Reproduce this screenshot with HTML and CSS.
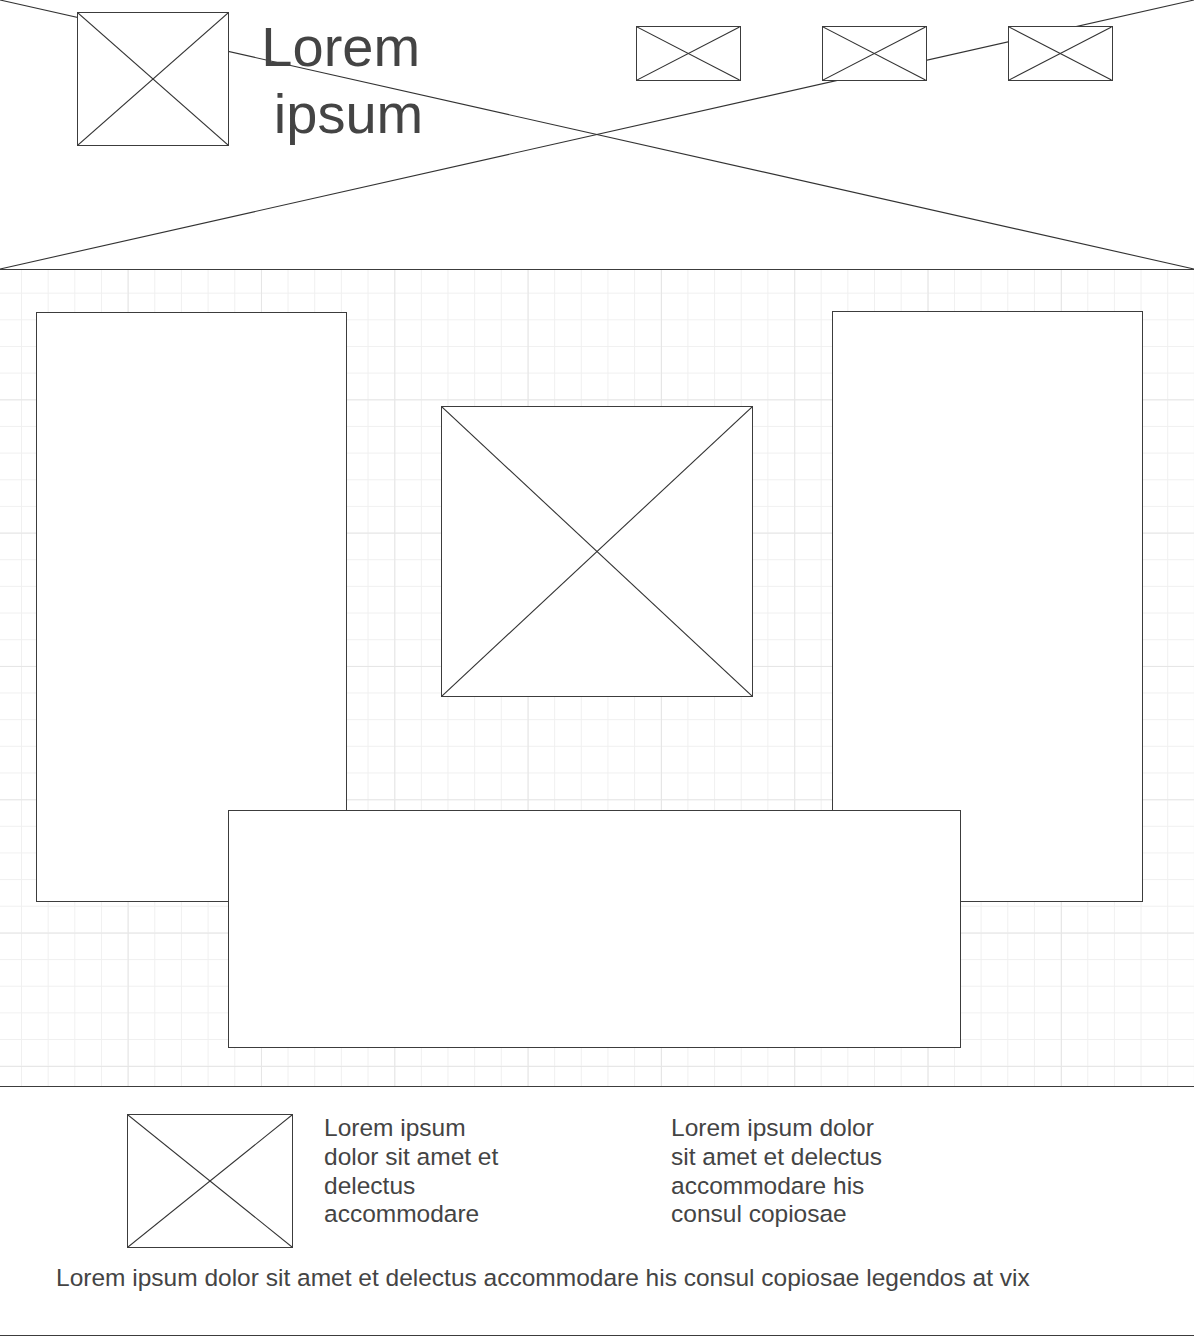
FILE: index.html
```html
<!DOCTYPE html>
<html lang="en">
<head>
<meta charset="utf-8">
<title>Wireframe</title>
<link rel="stylesheet" href="styles.css">
</head>
<body>
<header class="masthead">
  <svg class="masthead-x" aria-hidden="true">
    <line x1="0" y1="0" x2="100%" y2="100%"></line>
    <line x1="0" y1="100%" x2="100%" y2="0"></line>
  </svg>
  <div class="ph logo">
    <svg><line x1="0" y1="0" x2="100%" y2="100%"></line><line x1="0" y1="100%" x2="100%" y2="0"></line></svg>
  </div>
  <h1 class="title">Lorem ipsum</h1>
  <nav class="nav">
    <div class="ph nav-item"><svg><line x1="0" y1="0" x2="100%" y2="100%"></line><line x1="0" y1="100%" x2="100%" y2="0"></line></svg></div>
    <div class="ph nav-item"><svg><line x1="0" y1="0" x2="100%" y2="100%"></line><line x1="0" y1="100%" x2="100%" y2="0"></line></svg></div>
    <div class="ph nav-item"><svg><line x1="0" y1="0" x2="100%" y2="100%"></line><line x1="0" y1="100%" x2="100%" y2="0"></line></svg></div>
  </nav>
</header>

<main class="stage">
  <div class="panel panel-left"></div>
  <div class="panel panel-right"></div>
  <div class="ph hero"><svg><line x1="0" y1="0" x2="100%" y2="100%"></line><line x1="0" y1="100%" x2="100%" y2="0"></line></svg></div>
  <div class="panel panel-bottom"></div>
</main>

<footer class="footer">
  <div class="footer-row">
    <div class="ph footer-img"><svg><line x1="0" y1="0" x2="100%" y2="100%"></line><line x1="0" y1="100%" x2="100%" y2="0"></line></svg></div>
    <p class="footer-col col-a">Lorem ipsum dolor sit amet et delectus accommodare</p>
    <p class="footer-col col-b">Lorem ipsum dolor sit amet et delectus accommodare his consul copiosae</p>
  </div>
  <p class="footer-note">Lorem ipsum dolor sit amet et delectus accommodare his consul copiosae legendos at vix</p>
</footer>
</body>
</html>
```

FILE: styles.css
```css
* { box-sizing: border-box; }

html, body {
  margin: 0;
  padding: 0;
  background: #fff;
}

body {
  width: 1194px;
  font-family: "Liberation Sans", Arial, sans-serif;
  color: #444;
}

/* placeholder image with X */
.ph {
  border: 1px solid #3c3c3c;
  background: #fff;
}
.ph svg {
  display: block;
  width: 100%;
  height: 100%;
}
.ph line,
.masthead-x line {
  stroke: #333;
  stroke-width: 1.1;
}

/* header */
.masthead {
  position: relative;
  z-index: 0;
  height: 270px;
  border-bottom: 1px solid #3c3c3c;
  display: flex;
  align-items: flex-start;
  padding-left: 77px;
  background: #fff;
}
.masthead-x {
  position: absolute;
  left: 0;
  top: 0;
  width: 100%;
  height: 100%;
  z-index: -1;
}
.logo {
  width: 152px;
  height: 134px;
  margin-top: 12px;
  flex: none;
}
.title {
  margin: 13px 0 0 0;
  width: 239px;
  flex: none;
  font-size: 56px;
  line-height: 67px;
  font-weight: normal;
  text-align: center;
  white-space: break-spaces;
  color: #444;
}
.nav {
  display: flex;
  gap: 81.5px;
  margin-left: 168px;
  margin-top: 26px;
}
.nav-item {
  width: 104.5px;
  height: 55px;
}

/* stage with grid */
.stage {
  display: grid;
  grid-template-columns: 192px 119px 94px 312px 79px 129px 182px;
  grid-template-rows: 1px 94px 291px 113px 92px 146px;
  padding: 41px 0 38px 36px;
  border-bottom: 1px solid #3c3c3c;
  background-color: #fff;
  background-image:
    linear-gradient(to right, #e6e6e6 1px, transparent 1px),
    linear-gradient(to bottom, #e6e6e6 1px, transparent 1px),
    linear-gradient(to right, #f0f0f0 1px, transparent 1px),
    linear-gradient(to bottom, #f0f0f0 1px, transparent 1px);
  background-size:
    133.333px 133.333px,
    133.333px 133.333px,
    26.667px 26.667px,
    26.667px 26.667px;
  background-position:
    127.67px 129.33px,
    127.67px 129.33px,
    21px 22.67px,
    21px 22.67px;
}
.panel {
  border: 1px solid #3c3c3c;
  background: #fff;
}
.panel-left {
  grid-column: 1 / 3;
  grid-row: 2 / 6;
}
.panel-right {
  grid-column: 6 / 8;
  grid-row: 1 / 6;
}
.hero {
  grid-column: 4 / 5;
  grid-row: 3 / 4;
}
.panel-bottom {
  grid-column: 2 / 7;
  grid-row: 5 / 7;
}

/* footer */
.footer {
  height: 249px;
  border-bottom: 1px solid #3c3c3c;
  padding-top: 27px;
}
.footer-row {
  display: flex;
  align-items: flex-start;
  padding-left: 127px;
}
.footer-img {
  width: 166px;
  height: 134px;
  flex: none;
}
.footer-col {
  margin: 0;
  font-size: 24.5px;
  line-height: 28.8px;
  flex: none;
}
.col-a {
  width: 188px;
  margin-left: 31px;
}
.col-b {
  width: 222px;
  margin-left: 159px;
}
.footer-note {
  margin: 16px 0 0 56px;
  font-size: 24.5px;
  line-height: 28.8px;
  white-space: nowrap;
}
```
